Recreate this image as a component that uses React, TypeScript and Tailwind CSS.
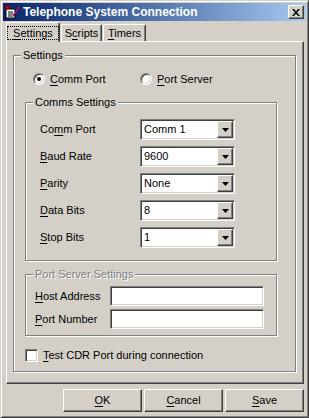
import React from "react";

const raised =
  "border border-t-white border-l-white border-r-[#404040] border-b-[#404040] shadow-[inset_-1px_-1px_0_#808080]";
const sunken =
  "border border-t-[#808080] border-l-[#808080] border-r-white border-b-white shadow-[inset_1px_1px_0_#404040,inset_-1px_-1px_0_#d4d0c8]";
const etched =
  "border border-[#808080] shadow-[inset_1px_1px_0_#fff,1px_1px_0_#fff]";

const U = ({ children }: { children: React.ReactNode }) => (
  <span className="underline underline-offset-[2px] decoration-1">{children}</span>
);

const Group = ({
  label,
  disabled,
  className,
  children,
}: {
  label: string;
  disabled?: boolean;
  className: string;
  children?: React.ReactNode;
}) => (
  <div className={`relative ${etched} ${className}`}>
    <span
      className={`absolute top-[-8px] left-[7px] bg-[#d4d0c8] px-[2px] leading-[14px] ${
        disabled ? "text-[#808080] [text-shadow:1px_1px_0_#fff]" : ""
      }`}
    >
      {label}
    </span>
    {children}
  </div>
);

const Combo = ({ value }: { value: string }) => (
  <div className={`flex h-[21px] w-[95px] bg-white ${sunken} p-[1px]`}>
    <div className="flex-1 pl-[2px] leading-[17px]">{value}</div>
    <div className={`flex h-[17px] w-[16px] items-center justify-center bg-[#d4d0c8] ${raised}`}>
      <svg width="7" height="4" viewBox="0 0 7 4">
        <path d="M0 0h7L3.5 4z" fill="#000" />
      </svg>
    </div>
  </div>
);

const Row = ({ label, value }: { label: React.ReactNode; value: string }) => (
  <div className="flex items-center">
    <div className="w-[114px] pl-[14px]">{label}</div>
    <Combo value={value} />
  </div>
);

const Radio = ({ checked }: { checked?: boolean }) => (
  <div
    className={`flex h-[12px] w-[12px] items-center justify-center rounded-full bg-white border border-t-[#808080] border-l-[#808080] border-r-white border-b-white shadow-[inset_1px_1px_0_#404040,inset_-1px_-1px_0_#d4d0c8]`}
  >
    {checked && <div className="h-[4px] w-[4px] rounded-full bg-black" />}
  </div>
);

const Btn = ({ children }: { children: React.ReactNode }) => (
  <div className={`flex h-[23px] w-[79px] items-center justify-center ${raised}`}>{children}</div>
);

export default function App() {
  return (
    <div className="h-[418px] w-[309px] bg-[#d4d0c8] text-[11px] text-black font-['Liberation_Sans',Arial,sans-serif] border border-t-[#d4d0c8] border-l-[#d4d0c8] border-r-[#404040] border-b-[#404040] shadow-[inset_1px_1px_0_#fff,inset_-1px_-1px_0_#808080] p-[2px] flex flex-col">
      {/* title bar */}
      <div className="flex h-[18px] items-center bg-gradient-to-r from-[#0a246a] to-[#a6caf0] pl-[1px] pr-[2px]">
        <svg width="16" height="16" viewBox="0 0 16 16" className="mr-[3px]">
          <path d="M2 5h9v9H2z" fill="#fff" stroke="#000" />
          <path d="M4 8h5M4 10h5M4 12h4" stroke="#000" />
          <path d="M1 3c1-2 4-2 5 0l-1 2H2z" fill="#c00020" stroke="#600" strokeWidth="0.6" />
          <path d="M9 11l6-9 1 1-6 9z" fill="#e0208a" stroke="#600030" strokeWidth="0.6" />
          <path d="M9 11l-1 2 2-1z" fill="#000" />
        </svg>
        <span className="flex-1 text-[12px] font-bold text-white leading-[18px]">Telephone System Connection</span>
        <div className={`flex h-[14px] w-[16px] items-center justify-center bg-[#d4d0c8] ${raised}`}>
          <svg width="8" height="7" viewBox="0 0 8 7">
            <path d="M0 0h2l2 2.5L6 0h2L5 3.5 8 7H6L4 4.5 2 7H0l3-3.5z" fill="#000" />
          </svg>
        </div>
      </div>

      <div className="flex flex-col pl-[3px] pt-[1px]">
        {/* tabs */}
        <div className="flex h-[19px] items-end">
          <div className="relative z-10 -mb-px flex h-[20px] w-[54px] items-center justify-center rounded-t-[2px] bg-[#d4d0c8] border-t border-l border-r border-t-white border-l-white border-r-[#404040] shadow-[inset_-1px_0_0_#808080]">
            <span className="border border-dotted border-black px-[5px] leading-[12px] mt-[1px]">
              <U>S</U>ettings
            </span>
          </div>
          <div className="ml-[1px] flex h-[17px] w-[41px] items-center justify-center rounded-t-[2px] border-t border-l border-r border-t-white border-l-white border-r-[#404040] shadow-[inset_-1px_0_0_#808080]">
            <span>
              S<U>c</U>ripts
            </span>
          </div>
          <div className="ml-[1px] flex h-[17px] w-[43px] items-center justify-center rounded-t-[2px] border-t border-l border-r border-t-white border-l-white border-r-[#404040] shadow-[inset_-1px_0_0_#808080]">
            <span>
              <U>T</U>imers
            </span>
          </div>
        </div>

        {/* panel */}
        <div className={`h-[343px] w-[298px] ${raised} p-[1px] pt-[13px] pl-[6px]`}>
          <Group label="Settings" className="h-[317px] w-[283px] flex flex-col">
            <div className="mt-[17px] flex h-[12px] items-center">
              <div className="ml-[19px] flex w-[107px] items-center">
                <Radio checked />
                <span className="ml-[5px]">
                  <U>C</U>omm Port
                </span>
              </div>
              <div className="flex items-center">
                <Radio />
                <span className="ml-[5px]">
                  <U>P</U>ort Server
                </span>
              </div>
            </div>

            <Group label="Comms Settings" className="ml-[11px] mt-[17px] h-[159px] w-[252px] flex flex-col gap-[6px] pt-[16px]">
              <Row label={<>Co<U>m</U>m Port</>} value="Comm 1" />
              <Row label={<><U>B</U>aud Rate</>} value="9600" />
              <Row label={<><U>P</U>arity</>} value="None" />
              <Row label={<><U>D</U>ata Bits</>} value="8" />
              <Row label={<><U>S</U>top Bits</>} value="1" />
            </Group>

            <Group
              label="Port Server Settings"
              disabled
              className="ml-[11px] mt-[13px] h-[62px] w-[252px] flex flex-col gap-[3px] pt-[11px]"
            >
              <div className="flex items-center">
                <div className="w-[84px] pl-[9px]">
                  <U>H</U>ost Address
                </div>
                <div className={`h-[20px] w-[154px] bg-white ${sunken}`} />
              </div>
              <div className="flex items-center">
                <div className="w-[84px] pl-[9px]">
                  <U>P</U>ort Number
                </div>
                <div className={`h-[20px] w-[154px] bg-white ${sunken}`} />
              </div>
            </Group>

            <div className="ml-[11px] mt-[11px] flex items-center">
              <div className={`h-[13px] w-[13px] bg-white ${sunken}`} />
              <span className="ml-[5px]">
                <U>T</U>est CDR Port during connection
              </span>
            </div>
          </Group>
        </div>

        {/* buttons */}
        <div className="mt-[5px] flex w-[298px] justify-end gap-[2px]">
          <Btn>
            <span>
              <U>O</U>K
            </span>
          </Btn>
          <Btn>
            <span>
              <U>C</U>ancel
            </span>
          </Btn>
          <Btn>
            <span>
              <U>S</U>ave
            </span>
          </Btn>
        </div>
      </div>
    </div>
  );
}
